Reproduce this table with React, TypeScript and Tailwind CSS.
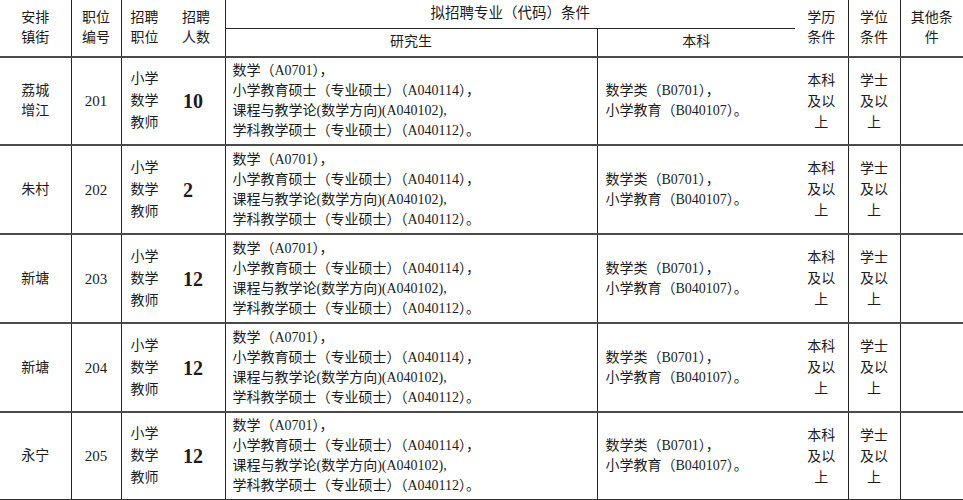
import React from "react";

type Row = { town: string[]; code: string; count: string };

const rows: Row[] = [
  { town: ["荔城", "增江"], code: "201", count: "10" },
  { town: ["朱村"], code: "202", count: "2" },
  { town: ["新塘"], code: "203", count: "12" },
  { town: ["新塘"], code: "204", count: "12" },
  { town: ["永宁"], code: "205", count: "12" },
];

const rowHeights = ["h-[88px]", "h-[89px]", "h-[89px]", "h-[89px]", "h-[88px]"];

const grad = [
  "数学（A0701），",
  "小学教育硕士（专业硕士）（A040114），",
  "课程与教学论(数学方向)(A040102),",
  "学科教学硕士（专业硕士）（A040112）。",
];

const undergrad = ["数学类（B0701），", "小学教育（B040107）。"];

function Lines({ items }: { items: string[] }) {
  return (
    <>
      {items.map((t, i) => (
        <div key={i}>{t}</div>
      ))}
    </>
  );
}

export default function App() {
  const v = "border-r border-r-[#262626]";
  const h = "border-b-2 border-b-[#4a4a4a]";
  return (
    <div className="w-[963px] h-[500px] overflow-hidden bg-white text-[#1c1c1c] font-['Liberation_Serif','Noto_Sans_CJK_SC',serif] text-[14px] leading-[20px]">
      <table className="table-fixed border-collapse w-[963px]">
        <colgroup>
          <col className="w-[71px]" />
          <col className="w-[50px]" />
          <col className="w-[49px]" />
          <col className="w-[55px]" />
          <col className="w-[372px]" />
          <col className="w-[198px]" />
          <col className="w-[53px]" />
          <col className="w-[52px]" />
          <col className="w-[63px]" />
        </colgroup>
        <thead>
          <tr className="h-[28px]">
            <th rowSpan={2} className={`${v} ${h} font-normal text-center align-middle`}>
              <Lines items={["安排", "镇街"]} />
            </th>
            <th rowSpan={2} className={`${v} ${h} font-normal text-center align-middle`}>
              <Lines items={["职位", "编号"]} />
            </th>
            <th rowSpan={2} className={`${h} font-normal text-left pl-[9px] align-middle`}>
              <Lines items={["招聘", "职位"]} />
            </th>
            <th rowSpan={2} className={`${v} ${h} font-normal text-left pl-[12px] align-middle`}>
              <Lines items={["招聘", "人数"]} />
            </th>
            <th colSpan={2} className="border-b border-b-[#262626] font-normal text-center align-middle pb-[2px] text-[14.5px]">
              拟招聘专业（代码）条件
            </th>
            <th rowSpan={2} className={`${v} ${h} font-normal text-center align-middle`}>
              <Lines items={["学历", "条件"]} />
            </th>
            <th rowSpan={2} className={`${v} ${h} font-normal text-center align-middle`}>
              <Lines items={["学位", "条件"]} />
            </th>
            <th rowSpan={2} className={`${h} font-normal text-center align-middle`}>
              <Lines items={["其他条", "件"]} />
            </th>
          </tr>
          <tr className="h-[29px]">
            <th className={`${v} ${h} font-normal text-center align-middle`}>研究生</th>
            <th className={`${h} font-normal text-center align-middle`}>本科</th>
          </tr>
        </thead>
        <tbody>
          {rows.map((r, i) => {
            const last = i === rows.length - 1;
            const hb = last ? "border-b-2 border-b-[#333]" : h;
            return (
              <tr key={r.code} className={rowHeights[i]}>
                <td className={`${v} ${hb} text-center align-middle`}>
                  <Lines items={r.town} />
                </td>
                <td className={`${v} ${hb} text-center align-middle text-[15px]`}>{r.code}</td>
                <td className={`${hb} text-left pl-[9px] align-middle leading-[22px]`}>
                  <Lines items={["小学", "数学", "教师"]} />
                </td>
                <td className={`${v} ${hb} text-left pl-[13px] align-middle text-[20px] font-bold`}>
                  {r.count}
                </td>
                <td className={`${v} ${hb} text-left pl-[7px] align-middle whitespace-nowrap`}>
                  <Lines items={grad} />
                </td>
                <td className={`${hb} text-left pl-[8px] align-middle whitespace-nowrap`}>
                  <Lines items={undergrad} />
                </td>
                <td className={`${v} ${hb} text-center align-middle leading-[21px]`}>
                  <Lines items={["本科", "及以", "上"]} />
                </td>
                <td className={`${v} ${hb} text-center align-middle leading-[21px]`}>
                  <Lines items={["学士", "及以", "上"]} />
                </td>
                <td className={`${hb}`}></td>
              </tr>
            );
          })}
        </tbody>
      </table>
    </div>
  );
}
